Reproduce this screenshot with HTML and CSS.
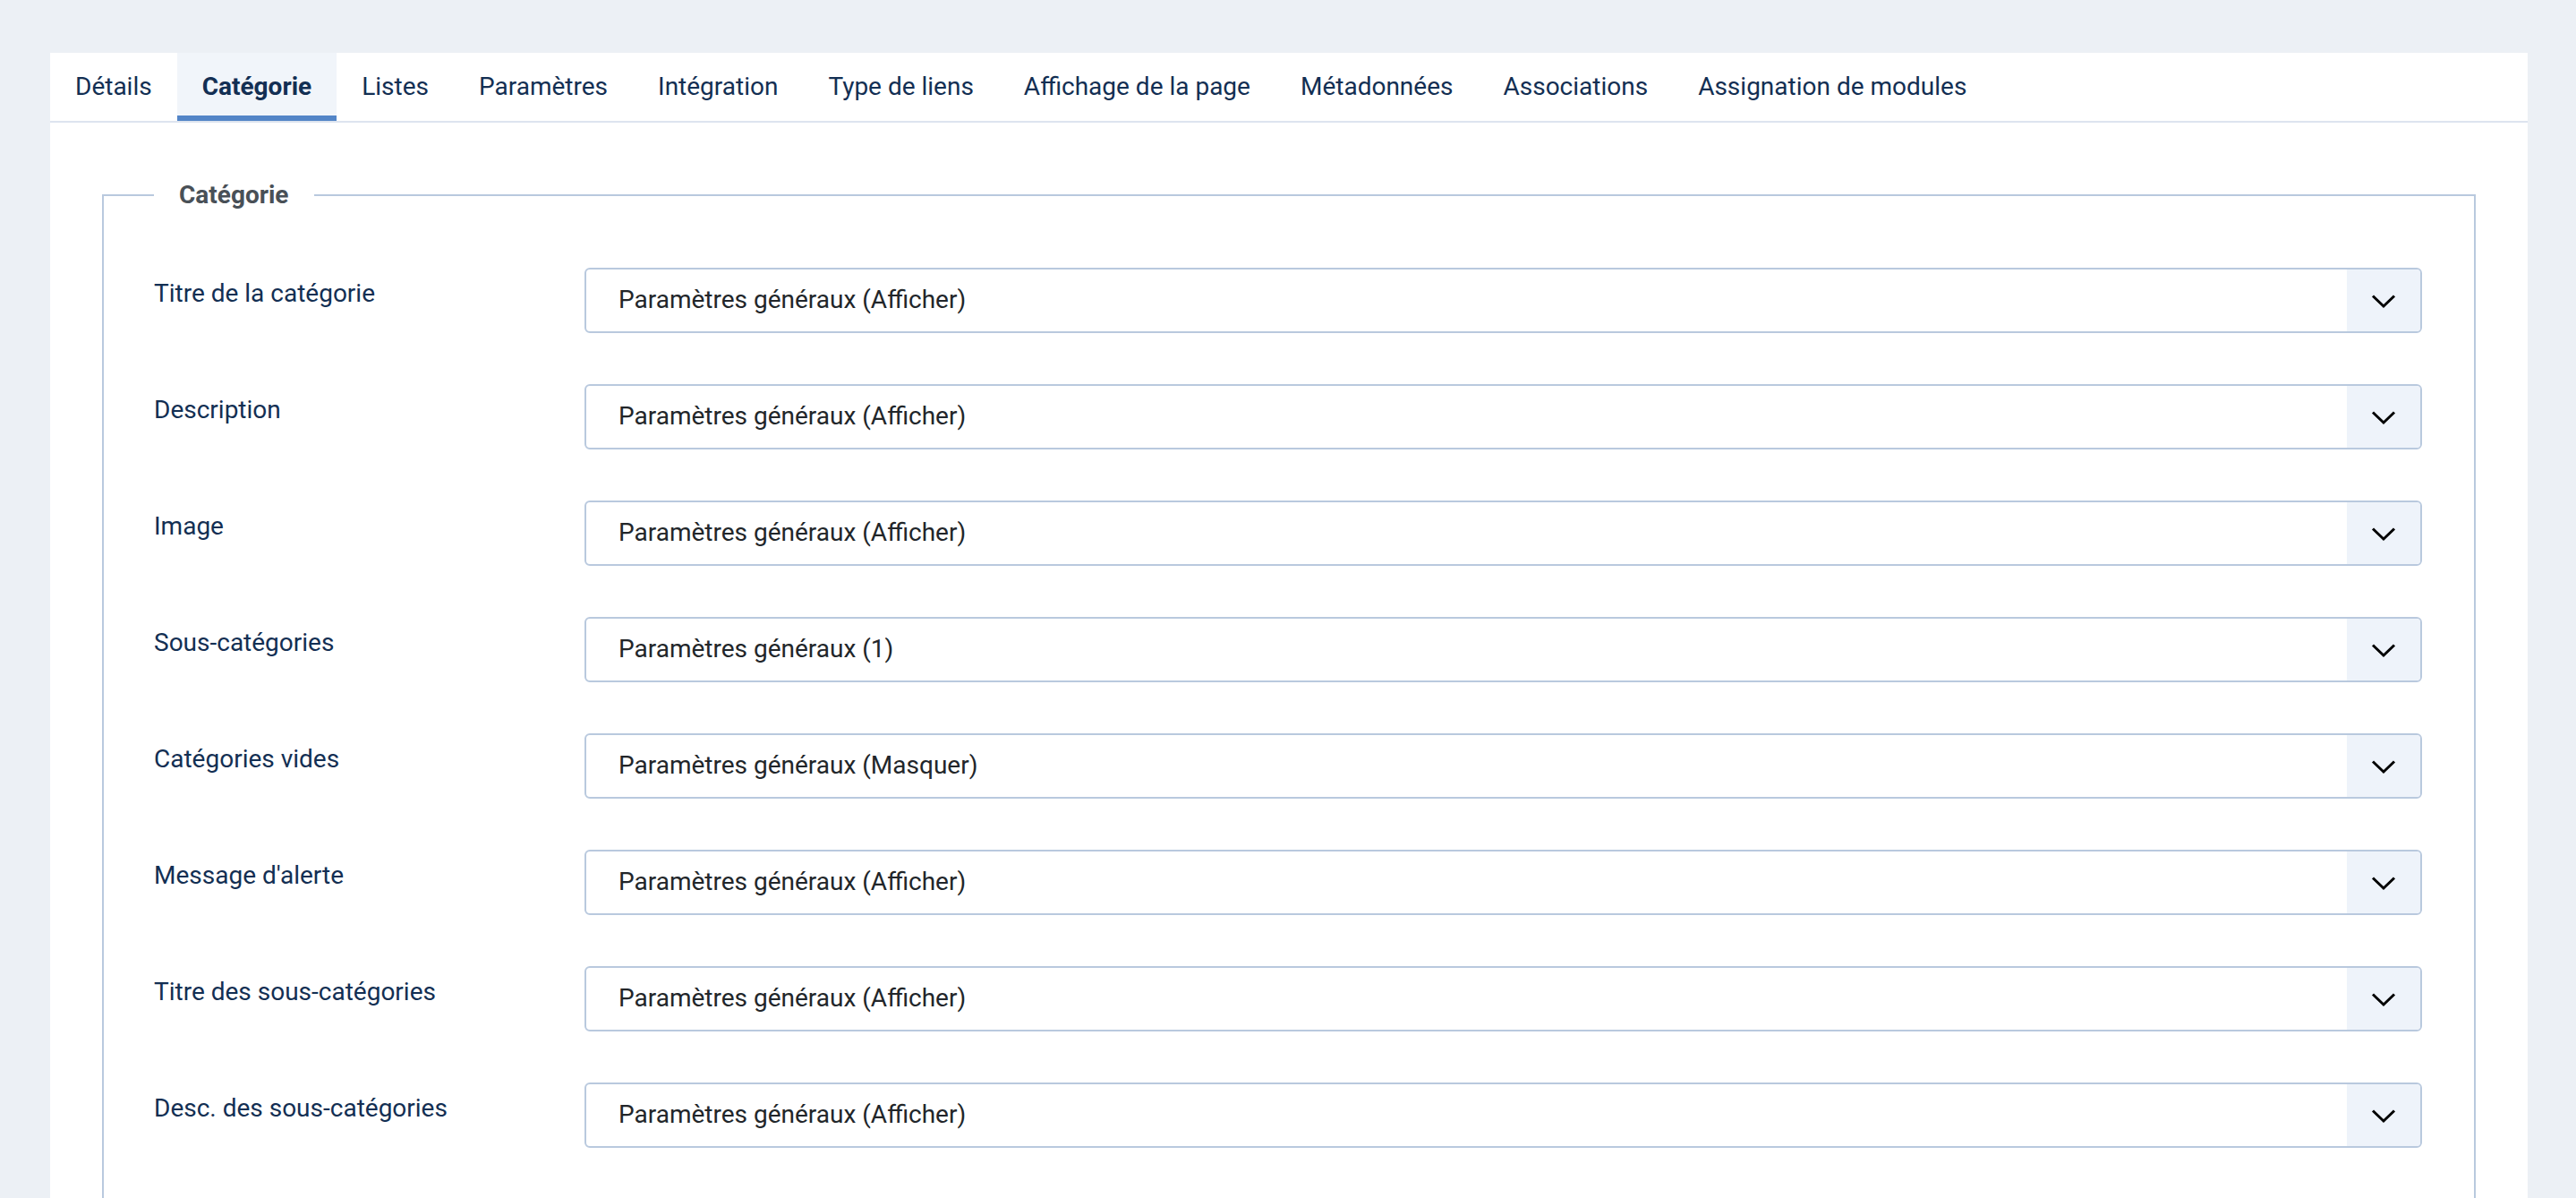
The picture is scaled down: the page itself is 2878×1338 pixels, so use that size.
FILE: index.html
```html
<!DOCTYPE html>
<html lang="fr">
<head>
<meta charset="utf-8">
<title>Catégorie</title>
<link rel="stylesheet" href="styles.css">
</head>
<body>
<div class="page">
  <div class="card">
    <nav class="tabs">
      <a class="tab">Détails</a>
      <a class="tab active">Catégorie</a>
      <a class="tab">Listes</a>
      <a class="tab">Paramètres</a>
      <a class="tab">Intégration</a>
      <a class="tab">Type de liens</a>
      <a class="tab">Affichage de la page</a>
      <a class="tab">Métadonnées</a>
      <a class="tab">Associations</a>
      <a class="tab">Assignation de modules</a>
    </nav>
    <div class="card-body">
      <fieldset class="group">
        <legend class="group-title">Catégorie</legend>

        <div class="row">
          <label class="row-label">Titre de la catégorie</label>
          <div class="select"><span class="select-value">Paramètres généraux (Afficher)</span><span class="select-btn"><svg width="28" height="17" viewBox="0 0 28 17"><path d="M2 2.5 L14 14 L26 2.5" fill="none" stroke="#000" stroke-width="3"/></svg></span></div>
        </div>

        <div class="row">
          <label class="row-label">Description</label>
          <div class="select"><span class="select-value">Paramètres généraux (Afficher)</span><span class="select-btn"><svg width="28" height="17" viewBox="0 0 28 17"><path d="M2 2.5 L14 14 L26 2.5" fill="none" stroke="#000" stroke-width="3"/></svg></span></div>
        </div>

        <div class="row">
          <label class="row-label">Image</label>
          <div class="select"><span class="select-value">Paramètres généraux (Afficher)</span><span class="select-btn"><svg width="28" height="17" viewBox="0 0 28 17"><path d="M2 2.5 L14 14 L26 2.5" fill="none" stroke="#000" stroke-width="3"/></svg></span></div>
        </div>

        <div class="row">
          <label class="row-label">Sous-catégories</label>
          <div class="select"><span class="select-value">Paramètres généraux (1)</span><span class="select-btn"><svg width="28" height="17" viewBox="0 0 28 17"><path d="M2 2.5 L14 14 L26 2.5" fill="none" stroke="#000" stroke-width="3"/></svg></span></div>
        </div>

        <div class="row">
          <label class="row-label">Catégories vides</label>
          <div class="select"><span class="select-value">Paramètres généraux (Masquer)</span><span class="select-btn"><svg width="28" height="17" viewBox="0 0 28 17"><path d="M2 2.5 L14 14 L26 2.5" fill="none" stroke="#000" stroke-width="3"/></svg></span></div>
        </div>

        <div class="row">
          <label class="row-label">Message d'alerte</label>
          <div class="select"><span class="select-value">Paramètres généraux (Afficher)</span><span class="select-btn"><svg width="28" height="17" viewBox="0 0 28 17"><path d="M2 2.5 L14 14 L26 2.5" fill="none" stroke="#000" stroke-width="3"/></svg></span></div>
        </div>

        <div class="row">
          <label class="row-label">Titre des sous-catégories</label>
          <div class="select"><span class="select-value">Paramètres généraux (Afficher)</span><span class="select-btn"><svg width="28" height="17" viewBox="0 0 28 17"><path d="M2 2.5 L14 14 L26 2.5" fill="none" stroke="#000" stroke-width="3"/></svg></span></div>
        </div>

        <div class="row">
          <label class="row-label">Desc. des sous-catégories</label>
          <div class="select"><span class="select-value">Paramètres généraux (Afficher)</span><span class="select-btn"><svg width="28" height="17" viewBox="0 0 28 17"><path d="M2 2.5 L14 14 L26 2.5" fill="none" stroke="#000" stroke-width="3"/></svg></span></div>
        </div>
      </fieldset>
    </div>
  </div>
</div>
</body>
</html>
```

FILE: styles.css
```css
html, body {
  margin: 0;
  padding: 0;
}

body {
  background: #ecf0f5;
  font-family: Roboto, "Liberation Sans", Arial, sans-serif;
  font-size: 28px;
  line-height: 42px;
  color: #132f53;
}

.page {
  padding: 59px 54px 0 56px;
}

.card {
  background: #ffffff;
}

.tabs {
  display: flex;
  border-bottom: 2px solid #dde4ef;
}

.tab {
  display: block;
  padding: 17px 28px;
  color: #132f53;
  text-decoration: none;
  white-space: nowrap;
}

.tab.active {
  background: #f1f5fa;
  font-weight: 700;
  box-shadow: inset 0 -6px 0 #5385c7;
}

.card-body {
  padding: 60px 58px 0 58px;
}

.group {
  margin: 0;
  padding: 60px 58px 0 56px;
  border: 2px solid #b9c9de;
  min-width: 0;
}

.group-title {
  padding: 0 28px;
  font-weight: 700;
  color: #495057;
}

.row {
  display: flex;
  align-items: flex-start;
  margin-bottom: 57px;
}

.row-label {
  flex: 0 0 481px;
  padding-top: 8px;
  color: #132f53;
}

.select {
  flex: 1 1 auto;
  display: flex;
  height: 73px;
  box-sizing: border-box;
  border: 2px solid #b9c9de;
  border-radius: 6px;
  overflow: hidden;
  background: #ffffff;
}

.select-value {
  flex: 1 1 auto;
  padding: 13px 36px;
  color: #22262a;
}

.select-btn {
  flex: 0 0 82px;
  display: flex;
  align-items: center;
  justify-content: center;
  background: #eef3fa;
}

.select-btn svg {
  display: block;
  margin-top: 2px;
}
```
